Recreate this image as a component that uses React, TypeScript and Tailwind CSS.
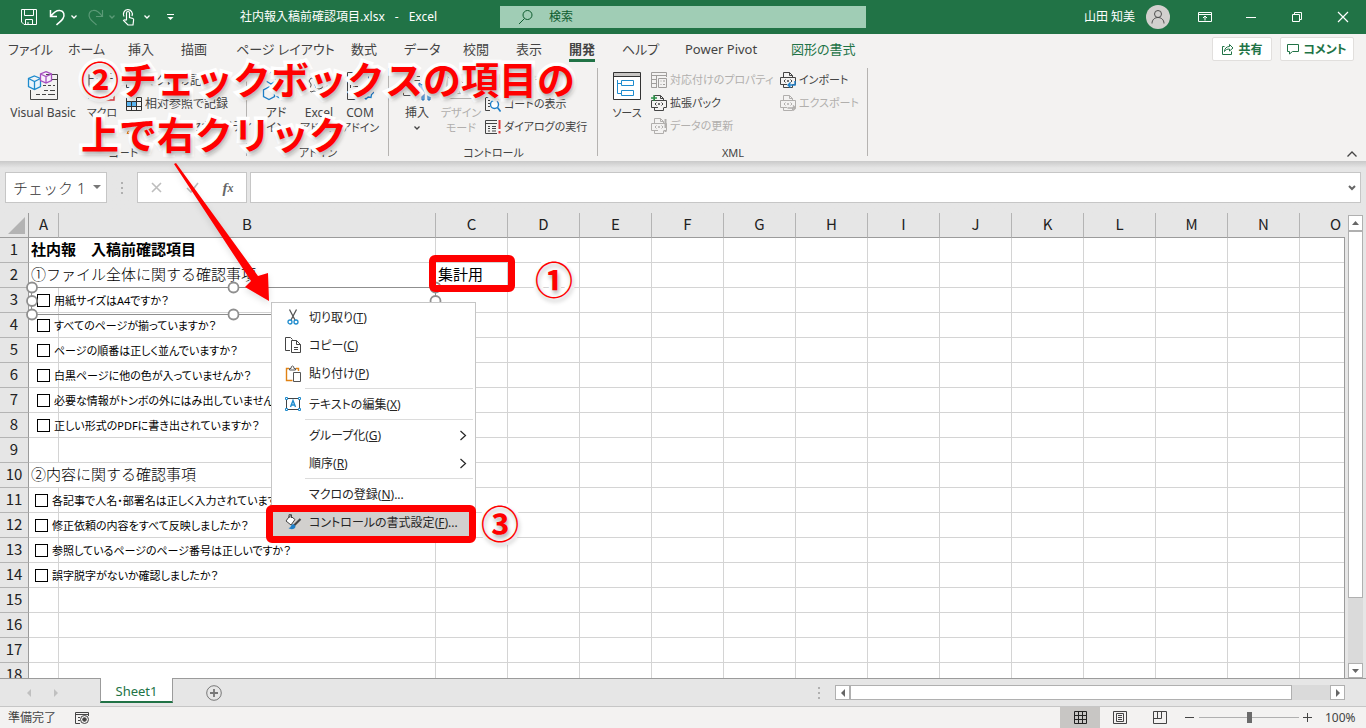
import type { ReactNode } from "react";

const tabs = [
  { name: "ファイル", width: "w-[60px]" },
  { name: "ホーム", width: "w-[60px]" },
  { name: "挿入", width: "w-[53px]" },
  { name: "描画", width: "w-[55px]" },
  { name: "ページ レイアウト", width: "w-[115px]" },
  { name: "数式", width: "w-[53px]" },
  { name: "データ", width: "w-[59px]" },
  { name: "校閲", width: "w-[53px]" },
  { name: "表示", width: "w-[53px]" },
  { name: "開発", width: "w-[53px]", active: true },
  { name: "ヘルプ", width: "w-[63px]" },
  { name: "Power Pivot", width: "w-[106px]" },
  { name: "図形の書式", width: "w-[80px]", green: true },
];

const columns = ["A", "B", "C", "D", "E", "F", "G", "H", "I", "J", "K", "L", "M", "N", "O"];

type Row = { text?: string; bold?: boolean; check?: string; left?: string; c?: string };

const rows: Row[] = [
  { text: "社内報　入稿前確認項目", bold: true },
  { text: "①ファイル全体に関する確認事項", c: "集計用" },
  { check: "用紙サイズはA4ですか？" },
  { check: "すべてのページが揃っていますか？" },
  { check: "ページの順番は正しく並んでいますか？" },
  { check: "白黒ページに他の色が入っていませんか？" },
  { check: "必要な情報がトンボの外にはみ出していませんか？" },
  { check: "正しい形式のPDFに書き出されていますか？" },
  {},
  { text: "②内容に関する確認事項" },
  { check: "各記事で人名・部署名は正しく入力されていますか？", left: "pl-[6px]" },
  { check: "修正依頼の内容をすべて反映しましたか？", left: "pl-[6px]" },
  { check: "参照しているページのページ番号は正しいですか？", left: "pl-[6px]" },
  { check: "誤字脱字がないか確認しましたか？", left: "pl-[6px]" },
  {},
  {},
  {},
  {},
];

function Svg({ w, h, children, className = "" }: { w: number; h: number; children: ReactNode; className?: string }) {
  return (
    <svg width={w} height={h} viewBox={`0 0 ${w} ${h}`} fill="none" stroke="currentColor" className={`shrink-0 ${className}`} aria-hidden="true">
      {children}
    </svg>
  );
}

function Chevron({ className = "" }: { className?: string }) {
  return (
    <Svg w={8} h={6} className={className}>
      <path d="M1.5 1.5 4 4l2.5-2.5" strokeWidth="1.3" />
    </Svg>
  );
}

function TitleBar() {
  return (
    <header className="grid h-[34px] shrink-0 grid-cols-[1fr_366px_1fr] items-center bg-[#217346] text-white">
      <div className="flex items-center pl-[20px]">
        <button aria-label="上書き保存" className="w-[29px]">
          <Svg w={18} h={18}>
            <path d="M1.500 1.500h15v15H4l-2.500-2.500zM4.500 1.500v6h9v-6M5.500 16.500v-5h7v5M8 14v2.500" />
          </Svg>
        </button>
        <button aria-label="元に戻す" className="flex w-[38px] items-center gap-1">
          <Svg w={17} h={18}>
            <path d="M1.500 2v6.500H8M2 8C5 4 8 2 11 2.500c4 .5 5 5 3 8-1.500 2.500-4 4-6.500 6.500" strokeWidth="1.500" />
          </Svg>
          <Chevron />
        </button>
        <button aria-label="やり直し" className="flex w-[35px] items-center gap-1 text-[#5b9a77]">
          <Svg w={17} h={18}>
            <path d="M15.500 2v6.500H9M15 8C12 4 9 2 6 2.500c-4 .5-5 5-3 8 1.500 2.500 4 4 6.500 6.500" strokeWidth="1.200" />
          </Svg>
          <Chevron />
        </button>
        <button aria-label="タッチ/マウス モード" className="flex w-[44px] items-center gap-2">
          <Svg w={13} h={18}>
            <path d="M4.500 12V5a1.500 1.500 0 0 1 3 0v4.500l3.500 1q1 .5.500 2.500l-.5 4H6L1.500 12.500q1-1.500 3 0" strokeWidth="1.200" />
            <path d="M2 8.500A4.500 4.500 0 1 1 10 8" strokeWidth="1.200" />
          </Svg>
          <Chevron />
        </button>
        <button aria-label="クイック アクセス ツール バーのユーザー設定" className="w-[16px]">
          <Svg w={9} h={8}>
            <path d="M1 1.500h7" />
            <path d="M1.500 4h6L4.500 7z" fill="currentColor" stroke="none" />
          </Svg>
        </button>
        <h1 className="ml-[58px] flex gap-[10px] text-[12px] whitespace-nowrap">
          <span>社内報入稿前確認項目.xlsx</span>
          <span>-</span>
          <span>Excel</span>
        </h1>
      </div>
      <label className="flex h-[22px] items-center bg-[#a0cdb5] pl-[18px] text-[#0e5c2f]">
        <Svg w={16} h={16}>
          <circle cx="9.500" cy="6" r="4.500" />
          <path d="M6.500 9.500 1 15" />
        </Svg>
        <input aria-label="検索" placeholder="検索" className="ml-[15px] min-w-0 flex-1 text-[12px] outline-none placeholder:text-[#0e5c2f]" />
      </label>
      <div className="flex items-center justify-end">
        <span className="text-[12px]">山田 知美</span>
        <span className="ml-[11px] flex size-[24px] items-center justify-center rounded-full bg-[#d2d0ce] text-[#505050]">
          <Svg w={16} h={16}>
            <circle cx="8" cy="5" r="3.500" />
            <path d="M2 14.500c0-8 12-8 12 0" />
          </Svg>
        </span>
        <button aria-label="リボンの表示オプション" className="ml-[12px] flex w-[46px] justify-center">
          <Svg w={14} h={12}>
            <path d="M.5 1.500h13v9H.5zM.5 3.500h13M7 9.500v-4M5 7l2-2 2 2" />
          </Svg>
        </button>
        <button aria-label="最小化" className="flex w-[46px] justify-center">
          <Svg w={10} h={10}>
            <path d="M0 5.500h10" />
          </Svg>
        </button>
        <button aria-label="元に戻す (縮小)" className="flex w-[46px] justify-center">
          <Svg w={11} h={11}>
            <path d="M.5 2.500h7v7h-7zM2.500 2.500v-2h7v7h-2" />
          </Svg>
        </button>
        <button aria-label="閉じる" className="flex w-[46px] justify-center">
          <Svg w={12} h={12}>
            <path d="m1 1 10 10M11 1 1 11" strokeWidth="1.200" />
          </Svg>
        </button>
      </div>
    </header>
  );
}

function TabRow() {
  return (
    <div className="flex h-[30px] shrink-0 items-center justify-between pr-[12px] pl-[8px]">
      <nav className="flex h-full">
        {tabs.map((tab) => (
          <button
            key={tab.name}
            className={`flex h-full items-start whitespace-nowrap text-[13px] leading-[26px] ${tab.width} ${tab.active ? "font-bold" : ""} ${tab.green ? "text-[#217346]" : "text-[#444]"}`}
          >
            <span className={`h-[28px] pt-[2px] ${tab.active ? "border-b-3 border-[#217346]" : ""}`}>{tab.name}</span>
          </button>
        ))}
      </nav>
      <div className="flex gap-2 text-[12px] font-bold text-[#217346]">
        <button className="flex h-[24px] w-[60px] items-center justify-center gap-1 rounded-xs border border-[#e1dfdd] bg-white">
          <Svg w={13} h={12}>
            <path d="M3.500 3.500h-2v8h9v-3M3.500 8.500c0-3 2-5 5-5v-2l3.500 3.500L8.500 8V6c-2 0-4 .5-5 2.500z" />
          </Svg>
          <span className="pt-px">共有</span>
        </button>
        <button className="flex h-[24px] w-[74px] items-center justify-center gap-1 rounded-xs border border-[#e1dfdd] bg-white">
          <Svg w={12} h={11}>
            <path d="M.5.5h11v7h-6l-3 2.500V7.500h-2z" />
          </Svg>
          <span className="pt-px">コメント</span>
        </button>
      </div>
    </div>
  );
}

function Group({ label, width, children }: { label: string; width: string; children: ReactNode }) {
  return (
    <section className={`relative flex shrink-0 flex-col ${width}`}>
      <div className="flex flex-1">{children}</div>
      <h2 className="h-[19px] text-center text-[11px] leading-[22px] text-[#444]">{label}</h2>
      <span className="absolute top-[4px] right-0 bottom-[5px] w-px bg-[#b5b3b1]" />
    </section>
  );
}

function BigButton({ icon, lines, width, disabled }: { icon: ReactNode; lines: ReactNode[]; width: string; disabled?: boolean }) {
  return (
    <button disabled={disabled} className={`flex shrink-0 flex-col items-center pt-[5px] text-[12px] leading-[15px] whitespace-nowrap ${width} ${disabled ? "text-[#b1afad]" : "text-[#444]"}`}>
      <span className="mb-[3px] flex h-[33px] items-center">{icon}</span>
      {lines.map((line, i) => (
        <span key={i} className="flex h-[15px] items-center">{line}</span>
      ))}
    </button>
  );
}

function SmallButton({ icon, label, disabled }: { icon: ReactNode; label: string; disabled?: boolean }) {
  return (
    <button disabled={disabled} className={`flex h-[23px] items-center gap-[3px] whitespace-nowrap ${disabled ? "text-[#b1afad]" : "text-[#444]"}`}>
      {icon}
      <span className="pt-px">{label}</span>
    </button>
  );
}

const gearPath = "M10 1h4l1 3 2 1 3-1 2 3-2 3v2l2 3-2 3-3-1-2 1-1 3h-4l-1-3-2-1-3 1-2-3 2-3v-2L2 7l2-3 3 1 2-1z";

function XmlIcon({ kind }: { kind: "expand" | "refresh" | "import" | "export" }) {
  return (
    <Svg w={16} h={16}>
      <path d="M3.500 5V.5h6l3 3V5M9.500.5v3h3M3.500 13v2.500h9V13" />
      <path d="M3 5.500H.5v7H3M12.500 5.500h3v7h-3M3 5.500h10M3 12.500h4" />
      <path d="M5.500 7.500 4 9l1.500 1.500M10.500 7.500 12 9l-1.500 1.500" />
      <path d="M7.500 8.500h1v1h-1z" />
      {kind === "expand" && <path d="M0 3h6M3 0v6" stroke="#2b9348" strokeWidth="1.400" />}
      {kind === "refresh" && <path d="M14.500 1v9M14.500 12v2" strokeWidth="2" />}
      {kind === "import" && <path d="M15 9v4H8M10.500 10.500 8 13l2.500 2.500" stroke="#1e7fc8" strokeWidth="1.400" />}
      {kind === "export" && <path d="M7.500 13h8M13 10.500l2.500 2.500-2.500 2.500" strokeWidth="1.400" />}
    </Svg>
  );
}

function Ribbon() {
  return (
    <div className="flex h-[97px] shrink-0 items-stretch">
      <Group label="コード" width="w-[247px]">
        <BigButton
          width="w-[86px]"
          lines={["Visual Basic"]}
          icon={
            <Svg w={32} h={30}>
              <path d="M19 3.500h11.500v25h-27V19" stroke="#444" />
              <path d="M19 8.500h11M16 14.500h3M21 14.500h3M26 14.500h2M9 23.500h4M15 23.500h4M21 23.500h7M17 19.500h4M23 19.500h5" stroke="#444" />
              <path d="m7.500 5 6 2.500v8l-6 3-6-3v-8zM1.500 7.500l6 3 6-3M7.500 10.500v8" stroke="#1e8bcd" fill="#eaf5fc" strokeWidth="1.300" />
              <path d="m19 .7 5.500 2.300v6.500L19 12l-5.500-2.500V3zM13.500 3 19 5.500 24.500 3M19 5.500V12" stroke="#a64fc0" fill="#f8eefb" strokeWidth="1.300" />
            </Svg>
          }
        />
        <BigButton
          width="w-[32px]"
          lines={[<span key="m" className="text-[11px]">マクロ</span>]}
          icon={
            <Svg w={28} h={30}>
              <path d="M1 28V2.500h25V18M1 7.500h25M5 12.500h4M11 12.500h9M5 17.500h6" stroke="#444" />
              <path d="M15 18v11h11V18z" stroke="#d9363e" fill="#fff" strokeWidth="1.400" />
            </Svg>
          }
        />
        <div className="flex flex-col pt-[5px] pl-[8px] text-[12px]">
          <SmallButton
            label="マクロの記録"
            icon={
              <Svg w={16} h={16}>
                <path d="M.5 1.500h15v13H.5zM.5 5h15" stroke="#444" />
              </Svg>
            }
          />
          <SmallButton
            label="相対参照で記録"
            icon={
              <Svg w={16} h={14}>
                <path d="M0 5h10v4H0z" fill="#5ab4f0" stroke="none" />
                <path d="M.5.5h15v13H.5zM.5 4.500h15M.5 9.500h15M5.500.5v13M10.500.5v13" stroke="#333" />
              </Svg>
            }
          />
          <SmallButton
            label="マクロのセキュリティ"
            icon={
              <Svg w={16} h={16}>
                <path d="M8 1.500 15 14.500H1z" stroke="#e07b12" fill="#fbd9a8" />
                <path d="M8 6v4M8 11.500v1.500" stroke="#444" />
              </Svg>
            }
          />
        </div>
      </Group>

      <Group label="アドイン" width="w-[142px]">
        <BigButton
          width="w-[58px]"
          lines={["アド", "イン"]}
          icon={
            <Svg w={30} h={30}>
              <path d="m10 1 5 3v6l-5 3-5-3V4zM21 5l4 2.500v5L21 15l-4-2.500v-5zM8 16l5.500 3v6.500l-5.500 3-5.500-3V19zM21 17l5 3v5.500l-5 3-5-3V20z" stroke="#1e7fc8" strokeWidth="1.300" />
            </Svg>
          }
        />
        <BigButton
          width="w-[28px]"
          lines={["Excel", <span key="a" className="text-[11px]">アドイン</span>]}
          icon={
            <Svg w={24} h={24}>
              <path d={gearPath} stroke="#555" />
              <circle cx="12" cy="11" r="4" stroke="#555" />
            </Svg>
          }
        />
        <BigButton
          width="w-[54px]"
          lines={["COM", <span key="a" className="text-[11px]">アドイン</span>]}
          icon={
            <Svg w={28} h={30}>
              <path d="M14 28.500H1.500V1.500h21V14" stroke="#444" />
              <path d="M4.500 8v3M4.500 14v3M4.500 20v3M7 9.500h6M7 15.500h5M7 21.500h5" stroke="#444" />
              <path d="m20 15 2 2 3-.500.500 3 2 2-2 2-.5 3-3-.500-2 2-2-2-3 .500-.5-3-2-2 2-2 .5-3 3 .500z" stroke="#1e7fc8" fill="#eaf5fc" strokeWidth="1.300" />
              <circle cx="20" cy="21.500" r="2" stroke="#1e7fc8" />
            </Svg>
          }
        />
      </Group>

      <Group label="コントロール" width="w-[209px]">
        <BigButton
          width="w-[56px]"
          lines={["挿入", <Chevron key="c" />]}
          icon={
            <Svg w={32} h={30}>
              <path d="M7 5.500h12M3 24.500h14M2.500 14v10.500M5 9.500h14" stroke="#555" />
              <path d="M21 29V19l-3-2v-5l3 2 3-2v5l-1 2v10zM27 29V19M26 12h4l-1 5v12h-2" stroke="#1e6fb8" fill="#9ccbf0" />
            </Svg>
          }
        />
        <BigButton
          width="w-[32px]"
          disabled
          lines={[<span key="d" className="text-[11px]">デザイン</span>, <span key="m" className="text-[11px]">モード</span>]}
          icon={
            <Svg w={32} h={30}>
              <path d="M2 27.500h26L2 5zM8 22.500h8l-8-8zM14 8 24 18M20 4v6M26 18l-6-6" />
            </Svg>
          }
        />
        <div className="flex flex-col pt-[5px] pl-[8px] text-[11px]">
          <SmallButton
            label="プロパティ"
            icon={
              <Svg w={16} h={16}>
                <path d="M1.500 1.500h13v13h-13zM1.500 4.500h13M4 8h8M4 11h8" stroke="#444" />
              </Svg>
            }
          />
          <SmallButton
            label="コードの表示"
            icon={
              <Svg w={16} h={16}>
                <path d="M5 14.500H.5V1.500h13V4M3 4.500h2M3 7.500h2M3 10.500h2" stroke="#444" />
                <circle cx="9.500" cy="8.500" r="4" stroke="#1e7fc8" fill="#fff" strokeWidth="1.400" />
                <path d="m12.500 11.500 3 4" stroke="#1e7fc8" strokeWidth="1.600" />
              </Svg>
            }
          />
          <SmallButton
            label="ダイアログの実行"
            icon={
              <Svg w={16} h={16}>
                <path d="M12 1.500H.5v13H12M.5 4.500H12M3 7.500h2M7 7.500h4M3 9.500h2M7 9.500h4M3 12h2M7 12h4" stroke="#444" />
                <path d="M14.500 1v9M14.500 12v2.500" stroke="#e03c3c" strokeWidth="2" />
              </Svg>
            }
          />
        </div>
      </Group>

      <Group label="XML" width="w-[270px]">
        <BigButton
          width="w-[53px] pl-[5px]"
          lines={[<span key="s" className="text-[11px]">ソース</span>]}
          icon={
            <Svg w={28} h={28}>
              <path d="M.5.5h27v27H.5z" fill="#fff" stroke="#333" />
              <path d="M1 1h26v3H1z" fill="#c8c6c4" stroke="none" />
              <path d="M.5 4.500h27" stroke="#333" />
              <path d="M4.500 8v13.500H8M4.500 11.500H8M8.500 8.500h12v5h-12zM8.500 18.500h12v5h-12z" stroke="#1e8bcd" />
            </Svg>
          }
        />
        <div className="flex w-[129px] flex-col pt-[4px] text-[11px]">
          <SmallButton
            disabled
            label="対応付けのプロパティ"
            icon={
              <Svg w={16} h={16}>
                <path d="M6 15.500H.5V.5h15V5M.5 3.500h15M.5 7.500H6M.5 11.500H6M5.500 3.500v12M7.500 6.500h8v9h-8zM9.500 9h1M12 9h2M9.500 12.500h1M12 12.500h2" stroke="#a09e9c" />
              </Svg>
            }
          />
          <SmallButton label="拡張パック" icon={<XmlIcon kind="expand" />} />
          <SmallButton disabled label="データの更新" icon={<XmlIcon kind="refresh" />} />
        </div>
        <div className="flex flex-col pt-[4px] text-[11px]">
          <SmallButton label="インポート" icon={<XmlIcon kind="import" />} />
          <SmallButton disabled label="エクスポート" icon={<XmlIcon kind="export" />} />
        </div>
      </Group>

      <button aria-label="リボンを折りたたむ" className="mr-[8px] mb-[3px] ml-auto self-end text-[#444]">
        <Svg w={12} h={8}>
          <path d="m1.500 6.500 4.500-4.500 4.500 4.500" strokeWidth="1.300" />
        </Svg>
      </button>
    </div>
  );
}

function FormulaBar() {
  return (
    <div className="flex h-[52px] shrink-0 items-start bg-linear-to-b from-[#c9c9c9] to-[#e6e6e6] to-[7px] px-[5px] pt-[11px]">
      <div className="flex h-[31px] w-[102px] items-center border border-[#c6c6c6] bg-white pr-[5px] pl-[7px]">
        <input aria-label="名前ボックス" defaultValue="チェック 1" className="min-w-0 flex-1 pt-px text-[15px] font-light text-[#333] outline-none [font-feature-settings:normal]" />
        <Svg w={8} h={5}>
          <path d="M0 0h8L4 4z" fill="#777" stroke="none" />
        </Svg>
      </div>
      <div className="flex h-[31px] w-[30px] items-center justify-center">
        <Svg w={2} h={12}>
          <path d="M0 1h2M0 6h2M0 11h2" strokeWidth="2" stroke="#b0b0b0" />
        </Svg>
      </div>
      <div className="flex h-[31px] w-[110px] items-center border border-[#c6c6c6] bg-white text-[#bdbdbd]">
        <button aria-label="キャンセル" className="flex w-[36px] justify-center">
          <Svg w={11} h={11}>
            <path d="m1 1 9 9M10 1 1 10" strokeWidth="1.600" />
          </Svg>
        </button>
        <button aria-label="入力" className="flex w-[36px] justify-center">
          <Svg w={13} h={11}>
            <path d="m1 6 4 4 7-9" strokeWidth="1.600" />
          </Svg>
        </button>
        <button aria-label="関数の挿入" className="flex w-[36px] justify-center font-['Liberation_Serif',serif] text-[15px] leading-[18px] font-bold text-[#666] italic">
          f<span className="text-[12px]">x</span>
        </button>
      </div>
      <div className="ml-[3px] flex h-[31px] flex-1 items-center border border-[#c6c6c6] bg-white pr-[4px]">
        <input aria-label="数式バー" className="min-w-0 flex-1 px-2 text-[14px] outline-none" />
        <Svg w={8} h={6}>
          <path d="m1 1 3 3 3-3" stroke="#666" strokeWidth="2" />
        </Svg>
      </div>
    </div>
  );
}

function Handle({ x, y }: { x: number; y: number }) {
  return <circle cx={x} cy={y} r="5" fill="#fff" stroke="#8f8f8f" strokeWidth="1.800" />;
}

function Sheet() {
  return (
    <div className="flex min-h-0 flex-1">
      <div className="relative min-w-0 flex-1 overflow-hidden">
        <table className="w-[1372px] table-fixed border-separate border-spacing-0 bg-white text-[15px] leading-[22px]">
          <colgroup>
            <col className="w-[29px]" />
            <col className="w-[30px]" />
            <col className="w-[377px]" />
            {columns.slice(2).map((c) => (
              <col key={c} className="w-[72px]" />
            ))}
          </colgroup>
          <thead>
            <tr className="bg-[#e6e6e6]">
              <th className="h-[25px] border-r border-b border-[#9b9b9b] p-0">
                <Svg w={28} h={24}>
                  <path d="M25 4v17H8z" fill="#b3b3b3" stroke="none" />
                </Svg>
              </th>
              {columns.map((c) => (
                <th key={c} scope="col" className="h-[25px] border-r border-b border-[#9b9b9b] border-r-[#b4b4b4] px-0 pt-0 pb-[2px] font-['Noto_Sans_CJK_JP',sans-serif] font-normal text-[#222]">
                  {c}
                </th>
              ))}
            </tr>
          </thead>
          <tbody>
            {rows.map((row, i) => (
              <tr key={i}>
                <th scope="row" className="h-[25px] border-r border-b border-[#9b9b9b] border-b-[#b4b4b4] bg-[#e6e6e6] px-0 pt-0 pb-[2px] font-['Noto_Sans_CJK_JP',sans-serif] font-normal text-[#222]">
                  {i + 1}
                </th>
                {columns.map((c) => (
                  <td key={c} className={`h-[25px] border-b border-[#d4d4d4] p-0 whitespace-nowrap ${c === "A" && row.text ? "" : "border-r"}`}>
                    {c === "A" && row.text && <span className={`block w-0 pb-[2px] pl-[2px] [font-feature-settings:normal] ${row.bold ? "font-bold" : "font-light"}`}>{row.text}</span>}
                    {c === "A" && row.check && (
                      <label className={`flex w-0 items-center gap-[4px] pt-px text-[11px] ${row.left ?? "pl-[8px]"}`}>
                        <input type="checkbox" className="size-[13px] shrink-0 appearance-none border border-black bg-white" />
                        <span className="pt-px">{row.check}</span>
                      </label>
                    )}
                    {c === "C" && row.c && <span className="block pb-[2px] pl-[2px] [font-feature-settings:normal]">{row.c}</span>}
                  </td>
                ))}
              </tr>
            ))}
          </tbody>
        </table>
        <span className="absolute top-[25px] right-0 bottom-0 w-px bg-[#9b9b9b]" />
        {/* selection frame of the first check box */}
        <svg className="pointer-events-none absolute top-[68px] left-[26px]" width="416" height="40" fill="none" aria-hidden="true">
          <path d="M5.500 6.500h404v27H5.500z" stroke="#8f8f8f" />
          <Handle x={6} y={6.5} />
          <Handle x={6} y={20} />
          <Handle x={6} y={33.5} />
          <Handle x={207.5} y={6.5} />
          <Handle x={207.5} y={33.5} />
          <Handle x={409.5} y={6.5} />
          <Handle x={409.5} y={20} />
        </svg>
      </div>
      <div className="flex w-[21px] flex-col pt-[2px] pl-[3px]">
        <button aria-label="上へスクロール" className="flex h-[16px] w-[15px] items-center justify-center border border-[#b0b0b0] bg-white">
          <Svg w={7} h={4}>
            <path d="M0 4h7L3.500 0z" fill="#666" stroke="none" />
          </Svg>
        </button>
        <div className="w-[15px] flex-1 bg-[#dadada]">
          <div className="h-[85%] border border-[#b0b0b0] bg-white" />
        </div>
        <button aria-label="下へスクロール" className="flex h-[15px] w-[15px] items-center justify-center border border-[#b0b0b0] bg-white">
          <Svg w={7} h={4}>
            <path d="M0 0h7L3.500 4z" fill="#666" stroke="none" />
          </Svg>
        </button>
      </div>
    </div>
  );
}

function SheetTabs() {
  return (
    <div className="flex h-[28px] shrink-0 items-start">
      <div className="flex h-full w-[100px] items-center gap-[23px] border-t border-[#9b9b9b] pl-[26px] text-[#c0c0c0]">
        <button aria-label="前のシート">
          <Svg w={5} h={8}>
            <path d="M5 0v8L1 4z" fill="currentColor" stroke="none" />
          </Svg>
        </button>
        <button aria-label="次のシート">
          <Svg w={5} h={8}>
            <path d="M0 0v8l4-4z" fill="currentColor" stroke="none" />
          </Svg>
        </button>
      </div>
      <button className="h-[25px] w-[73px] border-x border-b-2 border-[#9b9b9b] border-b-[#217346] bg-white pt-[2px] text-[13px] leading-[23px] text-[#217346]">Sheet1</button>
      <div className="flex h-full flex-1 items-center border-t border-[#9b9b9b] pl-[33px]">
        <button aria-label="新しいシート" className="text-[#777]">
          <Svg w={16} h={16}>
            <circle cx="8" cy="8" r="7.300" />
            <path d="M8 4v8M4 8h8" strokeWidth="1.800" />
          </Svg>
        </button>
        <div className="ml-auto flex w-[527px] items-center">
          <Svg w={2} h={12} className="mr-[15px]">
            <path d="M0 1h2M0 6h2M0 11h2" strokeWidth="2" stroke="#b0b0b0" />
          </Svg>
          <button aria-label="左へスクロール" className="flex size-[15px] items-center justify-center border border-[#b0b0b0] bg-white">
            <Svg w={4} h={8}>
              <path d="M4 0v8L0 4z" fill="#666" stroke="none" />
            </Svg>
          </button>
          <div className="h-[15px] flex-1 bg-[#dadada]">
            <div className="h-full w-[92%] border border-[#b0b0b0] bg-white" />
          </div>
          <button aria-label="右へスクロール" className="flex size-[15px] items-center justify-center border border-[#b0b0b0] bg-white">
            <Svg w={4} h={8}>
              <path d="M0 0v8l4-4z" fill="#666" stroke="none" />
            </Svg>
          </button>
        </div>
        <span className="w-[21px]" />
      </div>
    </div>
  );
}

function StatusBar() {
  return (
    <footer className="flex h-[22px] shrink-0 items-center border-t border-[#c6c6c6] bg-[#f3f2f1] pl-[8px] text-[12px] text-[#444]">
      準備完了
      <button aria-label="マクロの記録" className="ml-[19px]">
        <Svg w={15} h={14}>
          <path d="M5 12.500H.5V1.500h13V5M.5 3.500h13M3 6.500h2M3 9.500h2" />
          <circle cx="9.500" cy="8.500" r="4" />
          <circle cx="9.500" cy="8.500" r="1.800" fill="currentColor" />
        </Svg>
      </button>
      <div className="ml-auto flex h-full items-center">
        <button aria-label="標準" className="flex h-full w-[40px] items-center justify-center bg-[#c8c6c4] text-[#222]">
          <Svg w={13} h={13}>
            <path d="M.5.5h12v12H.5zM.5 4.500h12M.5 8.500h12M4.500.5v12M8.500.5v12" />
          </Svg>
        </button>
        <button aria-label="ページ レイアウト表示" className="flex w-[40px] justify-center">
          <Svg w={14} h={13}>
            <path d="M.5.5h13v12H.5zM3.500 2.500h7v8h-7zM5 4.500h4M5 6.500h4M5 8.500h4" />
          </Svg>
        </button>
        <button aria-label="改ページ プレビュー" className="flex w-[40px] justify-center">
          <Svg w={14} h={13}>
            <path d="M.5.5h13v12H.5zM.5 7.500h8v-7M4.500.5v7" />
          </Svg>
        </button>
        <button aria-label="縮小" className="mx-[5px]">
          <Svg w={9} h={9}>
            <path d="M0 4.500h9" />
          </Svg>
        </button>
        <input
          type="range"
          aria-label="ズーム"
          defaultValue={50}
          className="h-px w-[100px] appearance-none bg-[#b0b0b0] [&::-webkit-slider-thumb]:h-[11px] [&::-webkit-slider-thumb]:w-[5px] [&::-webkit-slider-thumb]:appearance-none [&::-webkit-slider-thumb]:bg-[#6b6b6b]"
        />
        <button aria-label="拡大" className="mx-[4px]">
          <Svg w={9} h={9}>
            <path d="M0 4.500h9M4.500 0v9" />
          </Svg>
        </button>
        <span className="w-[50px] pl-[9px]">100%</span>
      </div>
    </footer>
  );
}

function MenuItem({ icon, label, mnemonic, dots, submenu, active }: { icon?: ReactNode; label: string; mnemonic: string; dots?: boolean; submenu?: boolean; active?: boolean }) {
  return (
    <button role="menuitem" className={`flex h-[28px] w-full items-center pr-[8px] text-left text-[12px] whitespace-nowrap ${active ? "bg-[#d2d0ce]" : ""}`}>
      <span className="flex w-[37px] justify-center pl-[5px]">{icon}</span>
      <span className="flex-1 pt-[2px]">
        {label}(<u>{mnemonic}</u>){dots && "..."}
      </span>
      {submenu && (
        <Svg w={8} h={11}>
          <path d="m1.500 1 5 4.500-5 4.500" strokeWidth="1.200" />
        </Svg>
      )}
    </button>
  );
}

function MenuSeparator() {
  return <div role="separator" className="my-px mr-[2px] ml-[33px] h-px bg-[#dcdcdc]" />;
}

function ContextMenu() {
  return (
    <div role="menu" className="absolute top-[302px] left-[271px] w-[205px] border border-[#c6c6c6] bg-white text-[#262626]">
      <MenuItem
        label="切り取り"
        mnemonic="T"
        icon={
          <Svg w={12} h={16}>
            <path d="M2.500.5 8 11M9.500.5 4 11" stroke="#555" strokeWidth="1.300" />
            <circle cx="3" cy="13" r="2" stroke="#1e8bcd" strokeWidth="1.300" />
            <circle cx="9" cy="13" r="2" stroke="#1e8bcd" strokeWidth="1.300" />
          </Svg>
        }
      />
      <MenuItem
        label="コピー"
        mnemonic="C"
        icon={
          <Svg w={16} h={16}>
            <path d="M5 13.500H.5V.5h5l2 2M6.500 3.500h5l4 4v8h-9zM11.500 3.500v4h4M9 10.500h4M9 12.500h4" stroke="#444" />
          </Svg>
        }
      />
      <MenuItem
        label="貼り付け"
        mnemonic="P"
        icon={
          <Svg w={16} h={17}>
            <path d="M4 3.500H1.500v12h6M11 3.500h2.500V6" stroke="#e08214" strokeWidth="1.400" />
            <path d="M4.500 5V3.500H6q0-2.500 1.500-2.500T9 3.500h1.500V5zM8.500 7.500h7v9h-7z" stroke="#555" fill="#fff" />
          </Svg>
        }
      />
      <MenuSeparator />
      <MenuItem
        label="テキストの編集"
        mnemonic="X"
        icon={
          <Svg w={16} h={14}>
            <path d="M1.500 3v8M14.500 3v8M3 1.500h10M3 12.500h10" stroke="#444" />
            <path d="M.5.5h2v2h-2zM13.500.5h2v2h-2zM.5 11.500h2v2h-2zM13.500 11.500h2v2h-2z" stroke="#1e8bcd" />
            <path d="m5.500 10 2.500-6.500 2.500 6.500M6.500 8h3" stroke="#1e8bcd" strokeWidth="1.400" />
          </Svg>
        }
      />
      <MenuSeparator />
      <MenuItem label="グループ化" mnemonic="G" submenu />
      <MenuItem label="順序" mnemonic="R" submenu />
      <MenuSeparator />
      <MenuItem label="マクロの登録" mnemonic="N" dots />
      <MenuItem
        active
        label="コントロールの書式設定"
        mnemonic="F"
        dots
        icon={
          <Svg w={17} h={16}>
            <path d="M5 1.500 1 7l5 4 4-5.500zM4 4V.7h2.500V4" stroke="#444" fill="#fff" />
            <path d="M15.500 5 9 11.500" stroke="#444" strokeWidth="2.200" />
            <path d="M8.500 10c-3 0-2 4-5 4 2 2 7 1.500 7-2z" fill="#1e7fc8" stroke="none" />
          </Svg>
        }
      />
    </div>
  );
}

function Callout({ className, children }: { className: string; children: ReactNode }) {
  return (
    <p className={`pointer-events-none absolute font-['Noto_Sans_CJK_JP',sans-serif] text-[38px] leading-[55px] font-bold whitespace-nowrap text-[#ff0000] [-webkit-text-stroke:7px_white] [font-feature-settings:normal] [font-kerning:none] [paint-order:stroke_fill] text-shadow-[1px_3px_4px_rgb(0_0_0/0.35)] ${className}`}>
      {children}
    </p>
  );
}

export default function App() {
  return (
    <div className="relative flex h-screen flex-col overflow-hidden bg-[#e6e6e6] font-['Noto_Sans','Noto_Sans_CJK_JP',sans-serif] text-[12px] [font-feature-settings:'palt']">
      <TitleBar />
      <div className="shrink-0 bg-[#f3f2f1]">
        <TabRow />
        <Ribbon />
      </div>
      <FormulaBar />
      <Sheet />
      <SheetTabs />
      <StatusBar />

      <ContextMenu />

      {/* step markers drawn on top of the window */}
      <svg className="pointer-events-none absolute top-[155px] left-[165px] drop-shadow-md" width="115" height="155" aria-hidden="true">
        <path d="M9 9 11 8 93 121l10-3 1 28-24-14 6-6z" fill="#ff0000" />
      </svg>
      <div className="pointer-events-none absolute top-[255px] left-[429px] h-[37px] w-[86px] rounded-md border-[7px] border-[#ff0000]" />
      <div className="pointer-events-none absolute top-[505px] left-[266px] h-[38px] w-[210px] rounded-md border-[7px] border-[#ff0000]" />
      <Callout className="top-[50px] left-[81px]">
        ②チェックボックスの項目の
        <br />
        上で右クリック
      </Callout>
      <Callout className="top-[250px] left-[535px]">①</Callout>
      <Callout className="top-[494px] left-[481px]">③</Callout>
    </div>
  );
}
